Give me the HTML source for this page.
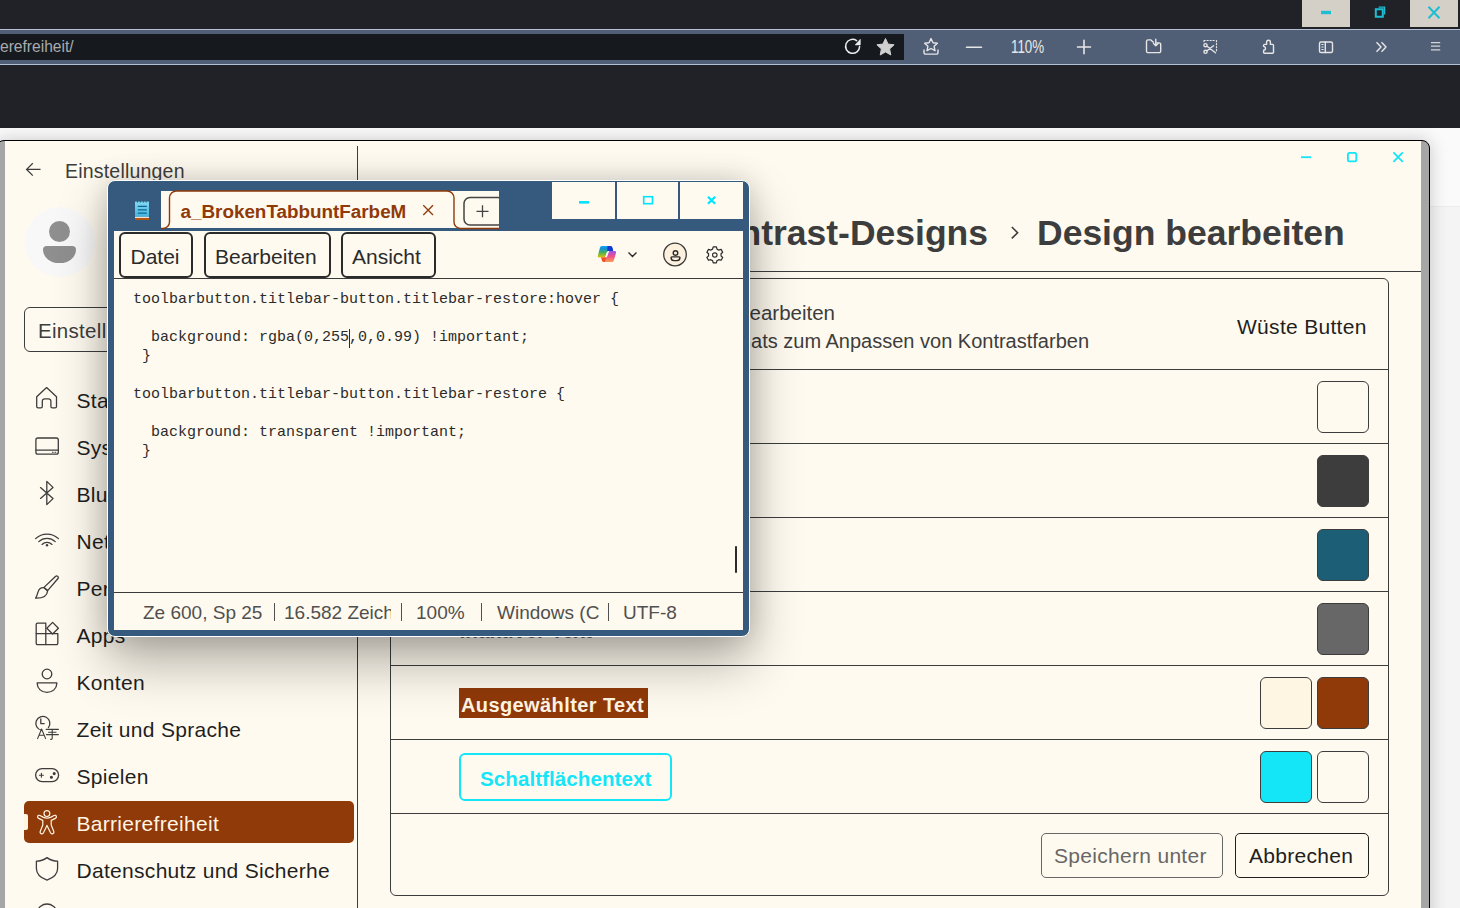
<!DOCTYPE html>
<html><head><meta charset="utf-8">
<style>
*{box-sizing:border-box;margin:0;padding:0}
html,body{width:1460px;height:908px;overflow:hidden;background:#202227;font-family:"Liberation Sans",sans-serif;position:relative}
.a{position:absolute}
svg{position:absolute;overflow:visible}
.t{position:absolute;white-space:pre;line-height:1}
</style></head><body>

<!-- ===== Browser chrome ===== -->
<div class="a" style="left:1302px;top:0;width:48px;height:27px;background:#d4d0c8"></div>
<div class="a" style="left:1410px;top:0;width:48px;height:27px;background:#d4d0c8"></div>
<div class="a" style="left:0;top:29px;width:1460px;height:36px;background:#b3c1d6"></div>
<div class="a" style="left:0;top:30px;width:1460px;height:34px;background:#505f76"></div>
<div class="a" style="left:0;top:34px;width:904px;height:26px;background:#161a1e"></div>
<div class="t" style="left:0;top:38.5px;font-size:15.6px;color:#a9abaf">erefreiheit/</div>


<svg width="1460" height="70" style="left:0;top:0" viewBox="0 0 1460 70">
 <g fill="none" stroke="#1ebdd3">
  <path d="M1321 12.5H1331" stroke-width="3.4"/>
  <path d="M1375.8 9.2h7v7.6h-7z" stroke-width="2"/>
  <path d="M1378.6 7.2h6v7.2" stroke-width="1.3"/>
  <path d="M1428.5 6.8L1439.5 18.2M1439.5 6.8L1428.5 18.2" stroke-width="2"/>
 </g>
 <g fill="none" stroke="#ececec" stroke-width="1.5" stroke-linecap="round">
  <path d="M856.6 40.6A7 7 0 1 0 859.6 46.4"/>
 </g>
 <path d="M855.2 44.9L860.3 39.3V44.9Z" fill="#ececec" stroke="#ececec" stroke-width="0.6" stroke-linejoin="round"/>
 <path d="M885.5 38.5l2.6 5.6 6.0.7-4.5 4.1 1.2 6.1-5.3-3.1-5.3 3.1 1.2-6.1-4.5-4.1 6.0-.7z" fill="#cfcfcf" stroke="#cfcfcf" stroke-width="1" stroke-linejoin="round"/>
 <g fill="none" stroke="#e6e6e6" stroke-width="1.4" stroke-linejoin="round" stroke-linecap="round">
  <path d="M931 38.6l2 4.2 4.4.5-3.3 3 .9 4.4-4-2.2-4 2.2.9-4.4-3.3-3 4.4-.5z"/>
  <path d="M924 50v2.5a1.6 1.6 0 0 0 1.6 1.6h10.8a1.6 1.6 0 0 0 1.6-1.6V50"/>
  <path d="M966.5 47.2H981.5" stroke-width="1.6"/>
  <path d="M1077.5 47H1090.5M1084 40.2V53.8" stroke-width="1.6"/>
  <path d="M1146.5 41.5v9.5a1.6 1.6 0 0 0 1.6 1.6h11a1.6 1.6 0 0 0 1.6-1.6v-6.5a1.6 1.6 0 0 0-1.6-1.6h-2.5M1146.5 41.5a1.6 1.6 0 0 1 1.6-1.6h2.8l2.2 2.2h0.5"/>
  <path d="M1155.8 39.2v6.2M1153.5 43.4l2.3 2.3 2.3-2.3"/>
  <path d="M1204 40.5h1.2M1207 40.5h1.2M1210 40.5h1.2M1213 40.5h1.2M1216.5 40.5v1.2M1216.5 43.5v1.2M1216.5 46.5v1.2M1216.5 49.5v1.2M1204 40.5v1.2" stroke-width="1.2"/>
  <circle cx="1205.5" cy="45.2" r="1.6"/><circle cx="1205.5" cy="51.8" r="1.6"/>
  <path d="M1207 46.3l8.5 6.5M1207 50.7l6.5-5"/>
  <path d="M1264.5 44.4H1266.6V42.2A1.9 1.9 0 0 1 1270.4 42.2V44.4H1272.6A0.9 0.9 0 0 1 1273.5 45.3V52.4A0.9 0.9 0 0 1 1272.6 53.3H1264.5A0.9 0.9 0 0 1 1263.6 52.4V50.2A1.9 1.9 0 0 0 1263.6 46.4V45.3A0.9 0.9 0 0 1 1264.5 44.4Z"/>
  <rect x="1319.5" y="42" width="13" height="10.5" rx="1.6"/>
  <path d="M1325.3 42v10.5"/>
  <path d="M1321.8 44.5h1.4M1321.8 47h1.4M1321.8 49.5h1.4" stroke-width="1.1"/>
  <path d="M1376.5 42.3l4.5 4.7-4.5 4.7M1381.5 42.3l4.5 4.7-4.5 4.7" stroke-linecap="butt"/>
  <path d="M1431 42.6h9.2M1431 46.2h9.2M1431 49.8h9.2" stroke="#d5d5d5" stroke-linecap="butt" stroke-width="1.3"/>
 </g>
</svg>
<div class="t" style="left:1011px;top:38px;font-size:18px;color:#e8e8e8;transform:scaleX(0.74);transform-origin:0 0">110%</div>

<!-- page white area below chrome -->
<div class="a" style="left:0;top:128px;width:1460px;height:780px;background:#fafafa"></div>
<div class="a" style="left:1430px;top:206px;width:30px;height:702px;background:#f4f4f4;border-top:1px solid #ececec"></div>

<!-- ===== Settings window ===== -->
<div id="settings" class="a" style="left:-4px;top:140px;width:1434px;height:800px;background:#a6a6a6;border:1px solid #000;border-radius:8px;box-shadow:0 0 18px rgba(0,0,0,0.2)">
</div>
<div class="a" style="left:5px;top:141px;width:1416px;height:767px;background:#fffaef"></div>


<!-- sidebar divider -->
<div class="a" style="left:357px;top:146px;width:1px;height:762px;background:#3d3d3d"></div>
<!-- back arrow -->
<svg width="20" height="20" style="left:24px;top:160px" viewBox="0 0 20 20"><path d="M3 9.4H16.5M8.8 3.2L2.6 9.4L8.8 15.6" fill="none" stroke="#3d3d3d" stroke-width="1.3"/></svg>
<div class="t" style="left:65px;top:161.5px;font-size:19.5px;letter-spacing:0.2px;color:#3d3d3d">Einstellungen</div>
<!-- avatar -->
<div class="a" style="left:25px;top:207px;width:70px;height:70px;border-radius:50%;background:#f8f8f8"></div>
<div class="a" style="left:49px;top:221px;width:21px;height:21px;border-radius:50%;background:#8f8f8f"></div>
<div class="a" style="left:43px;top:246px;width:33px;height:17px;border-radius:4px 4px 17px 17px/4px 4px 14px 14px;background:#8f8f8f"></div>
<!-- search box -->
<div class="a" style="left:24px;top:307px;width:318px;height:45px;border:1.3px solid #3d3d3d;border-radius:6px"></div>
<div class="t" style="left:38px;top:320.5px;font-size:20.5px;letter-spacing:0.3px;color:#3d3d3d">Einstellungen suchen</div>
<!-- nav selected -->
<div class="a" style="left:24px;top:801px;width:330px;height:42px;background:#903909;border-radius:5px"></div>
<div class="a" style="left:24px;top:814px;width:4px;height:16px;background:#fff5e3;border-radius:0 2px 2px 0"></div>
<div id="nav" class="a" style="left:0;top:130px;width:330px;height:778px;overflow:hidden"><div class="a" style="left:0;top:-130px;width:400px;height:908px"><div class="t" style="left:76.5px;top:390.02px;font-size:21px;letter-spacing:0.3px;color:#1f1f1f">Start</div>
<div class="t" style="left:76.5px;top:437.05px;font-size:21px;letter-spacing:0.3px;color:#1f1f1f">System</div>
<div class="t" style="left:76.5px;top:484.08px;font-size:21px;letter-spacing:0.3px;color:#1f1f1f">Bluetooth und Geräte</div>
<div class="t" style="left:76.5px;top:531.11px;font-size:21px;letter-spacing:0.3px;color:#1f1f1f">Netzwerk und Internet</div>
<div class="t" style="left:76.5px;top:578.14px;font-size:21px;letter-spacing:0.3px;color:#1f1f1f">Personalisierung</div>
<div class="t" style="left:76.5px;top:625.17px;font-size:21px;letter-spacing:0.3px;color:#1f1f1f">Apps</div>
<div class="t" style="left:76.5px;top:672.20px;font-size:21px;letter-spacing:0.3px;color:#1f1f1f">Konten</div>
<div class="t" style="left:76.5px;top:719.23px;font-size:21px;letter-spacing:0.3px;color:#1f1f1f">Zeit und Sprache</div>
<div class="t" style="left:76.5px;top:766.26px;font-size:21px;letter-spacing:0.3px;color:#1f1f1f">Spielen</div>
<div class="t" style="left:76.5px;top:813.29px;font-size:21px;letter-spacing:0.3px;color:#fff5e3">Barrierefreiheit</div>
<div class="t" style="left:76.5px;top:860.32px;font-size:21px;letter-spacing:0.3px;color:#1f1f1f">Datenschutz und Sicherheit</div>
<div class="t" style="left:76.5px;top:907.35px;font-size:21px;letter-spacing:0.3px;color:#1f1f1f">Windows Update</div></div></div>

<svg width="70" height="780" style="left:0;top:130px" viewBox="0 130 70 780">
 <g fill="none" stroke="#3d3d3d" stroke-width="1.3" stroke-linejoin="round" stroke-linecap="round">
  <!-- home -->
  <path d="M36.7 396.8L46.6 387.6L56.5 396.8V406.4A1.4 1.4 0 0 1 55.1 407.8H52.3A1.4 1.4 0 0 1 50.9 406.4V401.2A2.4 2.4 0 0 0 48.5 398.8H44.7A2.4 2.4 0 0 0 42.3 401.2V406.4A1.4 1.4 0 0 1 40.9 407.8H38.1A1.4 1.4 0 0 1 36.7 406.4Z"/>
  <!-- system -->
  <rect x="35.9" y="438" width="22.4" height="16.2" rx="2"/>
  <path d="M36 450.2H58.2"/>
  <path d="M52.4 452.2h0.8M55 452.2h0.8" stroke-width="1.1"/>
  <!-- bluetooth -->
  <path d="M40.5 487.6L53 498.6L46.8 504.6V481.4L53 487.4L40.5 498.4"/>
  <!-- wifi -->
  <path d="M35.6 538.6A16.5 16.5 0 0 1 58.4 538.6"/>
  <path d="M38.8 541.6A12 12 0 0 1 55.2 541.6"/>
  <path d="M42 544.4A7.4 7.4 0 0 1 52 544.4"/>
  <!-- brush -->
  <path d="M57.6 576.2C58.6 576.9 58.4 578 57.8 578.8L47.6 590.6L44 587.4L55.4 576.5C56.2 575.8 57 575.7 57.6 576.2Z"/>
  <path d="M43.8 587.6L47.6 591C47.2 595.6 43 598.4 35.6 598.2C36.8 596.6 37.2 594.4 38 592C38.8 589.2 41.2 587.4 43.8 587.6Z"/>
  <!-- apps -->
  <path d="M37.6 623.2H45.8V633.6H36.2V624.6A1.4 1.4 0 0 1 37.6 623.2Z"/>
  <path d="M36.2 633.6V643.2A1.4 1.4 0 0 0 37.6 644.6H45.8V633.6"/>
  <path d="M45.8 633.6H57.8V643.2A1.4 1.4 0 0 1 56.4 644.6H45.8"/>
  <path d="M52.6 622.4L58.4 628.2L52.6 634L46.8 628.2Z"/>
  <!-- konten -->
  <circle cx="47" cy="674" r="4.8"/>
  <path d="M37.2 682.8H56.8V683.6C56.8 688.6 52.4 692.4 47 692.4C41.6 692.4 37.2 688.6 37.2 683.6Z"/>
  <!-- zeit -->
  <path d="M48.4 727.6A7 7 0 1 0 41.4 730.2"/>
  <path d="M40.8 719V723.6H44.2"/>
  <path d="M37.6 738.6L41.6 729L45.6 738.6M39 735.2H44.2" stroke-width="1.1"/>
  <path d="M46.2 729.4H58.4M48.6 732.2H56M52.2 729.4V738.6C52.2 739.4 51.4 739.6 50.6 739.2M46.4 734.6H58.4" stroke-width="1.1"/>
  <!-- gamepad -->
  <rect x="35.6" y="768.6" width="23" height="13" rx="6.5"/>
  <path d="M39.4 775.2H43.4M41.4 773.2V777.2" stroke-width="1.1"/>
  <circle cx="51.4" cy="777.2" r="0.9" fill="#3d3d3d"/>
  <circle cx="54.2" cy="773.6" r="0.9" fill="#3d3d3d"/>
  <!-- shield -->
  <path d="M47 857.6C50.6 860.2 54 861.2 57.6 861.2V868.6C57.6 873.6 53.8 877.8 47 880.2C40.2 877.8 36.4 873.6 36.4 868.6V861.2C40 861.2 43.4 860.2 47 857.6Z"/>
  <!-- windows update partial -->
  <path d="M37.2 912A10 10 0 0 1 56.8 912"/>
 </g>
 <g fill="none" stroke="#fff5e3" stroke-width="1.2" stroke-linejoin="round">
  <circle cx="46.9" cy="813.6" r="2.9"/>
  <path d="M37.6 816.4C38 815.2 39 815 40 815.5L43.5 817.4C45.8 818.4 48.2 818.4 50.5 817.4L54 815.5C55 815 56 815.2 56.4 816.4C56.6 817.2 56.2 818 55.4 818.4L51.2 820.4V825L53.8 831.4C54.2 832.6 53.6 833.6 52.4 833.8C51.6 834 50.8 833.4 50.4 832.6L47 825.4L43.6 832.6C43.2 833.4 42.4 834 41.6 833.8C40.4 833.6 39.8 832.6 40.2 831.4L42.8 825V820.4L38.6 818.4C37.8 818 37.4 817.2 37.6 816.4Z"/>
 </g>
 <circle cx="47" cy="545.2" r="1.2" fill="#3d3d3d"/>
</svg>


<!-- caption buttons -->
<svg width="120" height="20" style="left:1295px;top:148px" viewBox="1295 148 120 20">
 <g fill="none" stroke="#12e5f7" stroke-width="1.8">
  <path d="M1301 157.2H1311"/>
  <rect x="1347.9" y="152.9" width="8.4" height="8.4" rx="1.6"/>
  <path d="M1393.4 152.4L1402.8 161.8M1402.8 152.4L1393.4 161.8"/>
 </g>
</svg>

<!-- heading -->
<div class="t" style="left:488px;width:500px;text-align:right;top:215.6px;font-size:35.5px;font-weight:700;color:#3d3d3d">Kontrast-Designs</div>
<svg width="12" height="16" style="left:1010px;top:225px" viewBox="0 0 12 16"><path d="M1.8 2L7.6 7.7L1.8 13.4" fill="none" stroke="#3d3d3d" stroke-width="1.6"/></svg>
<div class="t" style="left:1037px;top:215.6px;font-size:35.5px;font-weight:700;color:#3d3d3d">Design bearbeiten</div>
<div class="a" style="left:358px;top:271px;width:1063px;height:1px;background:#3d3d3d"></div>

<!-- card -->
<div class="a" style="left:390px;top:278px;width:999px;height:618px;border:1px solid #3d3d3d;border-radius:6px"></div>
<div class="a" style="left:391px;top:369px;width:997px;height:1px;background:#3d3d3d"></div>
<div class="a" style="left:391px;top:443px;width:997px;height:1px;background:#3d3d3d"></div>
<div class="a" style="left:391px;top:517px;width:997px;height:1px;background:#3d3d3d"></div>
<div class="a" style="left:391px;top:591px;width:997px;height:1px;background:#3d3d3d"></div>
<div class="a" style="left:391px;top:665px;width:997px;height:1px;background:#3d3d3d"></div>
<div class="a" style="left:391px;top:739px;width:997px;height:1px;background:#3d3d3d"></div>
<div class="a" style="left:391px;top:813px;width:997px;height:1px;background:#3d3d3d"></div>

<div class="t" style="left:435px;width:400px;text-align:right;top:302.6px;font-size:20.5px;color:#3d3d3d">Kontrastdesign bearbeiten</div>
<div class="t" style="left:489px;width:600px;text-align:right;top:330.7px;font-size:20px;color:#3d3d3d">Designformats zum Anpassen von Kontrastfarben</div>
<div class="t" style="left:1237px;top:315.7px;font-size:21px;letter-spacing:0.3px;color:#1f1f1f">Wüste Butten</div>

<div class="t" style="left:459px;top:388px;font-size:20px;font-weight:700;color:#3d3d3d">Text</div>
<div class="t" style="left:459px;top:462px;font-size:20px;font-weight:700;color:#1c5e75">Hyperlinks</div>
<div class="t" style="left:459.5px;top:621px;font-size:20.8px;font-weight:700;color:#676767">Inaktiver Text</div>

<div class="a" style="left:1317px;top:381px;width:52px;height:52px;border:1px solid #3d3d3d;border-radius:6px;background:#fffaef"></div>
<div class="a" style="left:1317px;top:455px;width:52px;height:52px;border:1px solid #3d3d3d;border-radius:6px;background:#3d3d3d"></div>
<div class="a" style="left:1317px;top:529px;width:52px;height:52px;border:1px solid #3d3d3d;border-radius:6px;background:#1c5e75"></div>
<div class="a" style="left:1317px;top:603px;width:52px;height:52px;border:1px solid #3d3d3d;border-radius:6px;background:#676767"></div>
<div class="a" style="left:1260px;top:677px;width:52px;height:52px;border:1px solid #3d3d3d;border-radius:6px;background:#fff5e3"></div>
<div class="a" style="left:1317px;top:677px;width:52px;height:52px;border:1px solid #3d3d3d;border-radius:6px;background:#903909"></div>
<div class="a" style="left:1260px;top:751px;width:52px;height:52px;border:1px solid #3d3d3d;border-radius:6px;background:#14e6f8"></div>
<div class="a" style="left:1317px;top:751px;width:52px;height:52px;border:1px solid #3d3d3d;border-radius:6px;background:#fffaef"></div>

<div class="a" style="left:459px;top:688px;width:189px;height:30px;background:#903909"></div>
<div class="t" style="left:461px;top:694.6px;font-size:20px;letter-spacing:0.4px;font-weight:700;color:#fff5e3">Ausgewählter Text</div>

<div class="a" style="left:459px;top:753px;width:213px;height:48px;border:2px solid #14e6f8;border-radius:6px"></div>
<div class="t" style="left:480px;top:768.6px;font-size:20.5px;letter-spacing:0.1px;font-weight:700;color:#14e6f8">Schaltflächentext</div>

<div class="a" style="left:1041px;top:833px;width:182px;height:45px;border:1px solid #676767;border-radius:5px"></div>
<div class="t" style="left:1054px;top:845px;font-size:21px;letter-spacing:0.3px;color:#676767">Speichern unter</div>
<div class="a" style="left:1235px;top:833px;width:134px;height:45px;border:1px solid #202020;border-radius:5px"></div>
<div class="t" style="left:1249px;top:845px;font-size:21px;letter-spacing:0.3px;color:#202020">Abbrechen</div>


<!-- ===== Notepad window ===== -->
<div class="a" style="left:107px;top:180px;width:643px;height:457px;background:#36597e;border:1px solid #fff;border-radius:8px;box-shadow:0 26px 52px rgba(0,0,0,0.30),0 0 28px rgba(0,0,0,0.16)"></div>
<!-- tab strip -->
<div class="a" style="left:161px;top:191px;width:338px;height:37px;background:#fffaef"></div>
<svg width="340" height="40" style="left:160px;top:190px" viewBox="160 190 340 40">
 <path d="M161 228.5H163A6.5 6.5 0 0 0 169.5 222V198A7 7 0 0 1 176.5 191H447A7 7 0 0 1 454 198V222A6.5 6.5 0 0 0 460.5 228.5H499" fill="none" stroke="#903909" stroke-width="1.4"/>
 <path d="M171 191V228" stroke="none"/>
 <path d="M423.3 205.3L433 215M433 205.3L423.3 215" stroke="#903909" stroke-width="1.3" fill="none"/>
 <rect x="464" y="197.5" width="40" height="27.5" rx="6" fill="none" stroke="#444" stroke-width="1.5"/>
 <path d="M476.5 211.3H488.5M482.5 205.3V217.3" stroke="#444" stroke-width="1.3" fill="none"/>
</svg>
<div class="a" style="left:499px;top:190px;width:6px;height:40px;background:#36597e"></div>
<div class="a" style="left:180px;top:197px;width:226px;height:28px;overflow:hidden"><div class="t" style="left:0.5px;top:4.5px;font-size:18.85px;font-weight:700;color:#903909;margin-top:1.5px">a_BrokenTabbuntFarbeMitCSS.txt</div></div>
<!-- notepad icon -->
<svg width="16" height="22" style="left:135px;top:200px" viewBox="0 0 16 22">
 <defs><linearGradient id="npg" x1="0" y1="0" x2="0" y2="1"><stop offset="0" stop-color="#86d8f2"/><stop offset="1" stop-color="#45b4de"/></linearGradient></defs>
 <rect x="0" y="1.6" width="14" height="15.2" fill="url(#npg)"/>
 <rect x="0" y="16.8" width="14" height="1.2" fill="#e8e4dc"/>
 <rect x="0" y="18" width="14" height="2" fill="#b4560e"/>
 <path d="M2.8 6.4H11.8M2.8 9.9H11.8M2.8 13.2H11.8" stroke="#0a6890" stroke-width="1.2"/>
 <path d="M2.5 1.2v1.4M5.4 1.2v1.4M8.4 1.2v1.4M11.2 1.2v1.4" stroke="#0a6890" stroke-width="1"/>
</svg>
<!-- window buttons -->
<div class="a" style="left:552px;top:182px;width:63px;height:37px;background:#fffaef"></div>
<div class="a" style="left:617px;top:182px;width:61px;height:37px;background:#fffaef"></div>
<div class="a" style="left:680px;top:182px;width:63px;height:37px;background:#fffaef"></div>
<svg width="200" height="40" style="left:550px;top:180px" viewBox="550 180 200 40">
 <path d="M579 202.3H589" stroke="#00e5ff" stroke-width="2.6"/>
 <rect x="643.7" y="196.7" width="8.8" height="7" fill="none" stroke="#00e5ff" stroke-width="1.6"/>
 <path d="M708 196.8L715.2 203.8M715.2 196.8L708 203.8" stroke="#00e5ff" stroke-width="2.3"/>
</svg>
<!-- content area -->
<div class="a" style="left:114px;top:231px;width:629px;height:399px;background:#fffaef"></div>
<div class="a" style="left:119px;top:231.5px;width:74px;height:46px;border:2px solid #2b2b2b;border-radius:6px"></div>
<div class="a" style="left:203.5px;top:231.5px;width:127px;height:46px;border:2px solid #2b2b2b;border-radius:6px"></div>
<div class="a" style="left:341px;top:231.5px;width:95px;height:46px;border:2px solid #2b2b2b;border-radius:6px"></div>
<div class="t" style="left:130.5px;top:245.5px;font-size:21px;color:#2b2b2b">Datei</div>
<div class="t" style="left:215px;top:245.5px;font-size:21px;color:#2b2b2b">Bearbeiten</div>
<div class="t" style="left:352px;top:245.5px;font-size:21px;color:#2b2b2b">Ansicht</div>
<div class="a" style="left:114px;top:278px;width:629px;height:1px;background:#3a3a3a"></div>
<!-- right icons -->
<svg width="160" height="40" style="left:590px;top:235px" viewBox="590 235 160 40">
 <defs>
  <linearGradient id="cp1" x1="0" y1="0" x2="0" y2="1"><stop offset="0" stop-color="#18a8f0"/><stop offset="0.2" stop-color="#1090e0"/><stop offset="0.55" stop-color="#40b060"/><stop offset="1" stop-color="#e8c000"/></linearGradient>
  <linearGradient id="cp2" x1="0" y1="0" x2="0" y2="1"><stop offset="0" stop-color="#9a50f0"/><stop offset="0.5" stop-color="#f05088"/><stop offset="1" stop-color="#f8a050"/></linearGradient>
 </defs>
 <path d="M601.5 246H610.5Q612 246 612.5 248L613.2 251H608.5Q607 251 606.6 252.5L605 257.5H599Q597.5 257.5 597.8 256L600 247.5Q600.4 246 601.5 246Z" fill="url(#cp1)"/>
 <path d="M607.5 246H610.5Q612 246 612.5 248L613.2 251H607.3Z" fill="#1438d0"/>
 <path d="M614.5 251Q616.5 251 616 253L613.8 260.5Q613.4 262 612 262H604Q602.5 262 602 260.5L601.2 257.5H605.5Q607 257.5 607.4 256L609 251.6Q609.2 251 610 251Z" fill="url(#cp2)"/>
 <path d="M601.2 257.5H606.2L604.8 262H604Q602.5 262 602 260.5Z" fill="#f05030"/>
 <path d="M628.5 252.5L632.5 256.5L636.5 252.5" fill="none" stroke="#2b2b2b" stroke-width="1.4"/>
 <circle cx="675" cy="254.5" r="11.3" fill="#fdf0dd" stroke="#3a3a3a" stroke-width="1.3"/>
 <circle cx="675.5" cy="253" r="2.3" fill="none" stroke="#2b2b2b" stroke-width="1.4"/>
 <path d="M671.8 256.9h7.4a0.7 0.7 0 0 1 0.7 0.8a3 2.9 0 0 1-2.9 2.9h-3a3 2.9 0 0 1-2.9-2.9a0.7 0.7 0 0 1 0.7-0.8z" fill="none" stroke="#2b2b2b" stroke-width="1.4"/>
 <g transform="translate(714.8 255)" fill="none" stroke="#2b2b2b" stroke-width="1.2" stroke-linejoin="round">
  <path d="M-1.6 -8.2h3.2l0.6 2.3a5.8 5.8 0 0 1 1.8 1l2.3-0.7 1.6 2.8-1.7 1.6a5.8 5.8 0 0 1 0 2.1l1.7 1.6-1.6 2.8-2.3-0.7a5.8 5.8 0 0 1-1.8 1l-0.6 2.3h-3.2l-0.6-2.3a5.8 5.8 0 0 1-1.8-1l-2.3 0.7-1.6-2.8 1.7-1.6a5.8 5.8 0 0 1 0-2.1l-1.7-1.6 1.6-2.8 2.3 0.7a5.8 5.8 0 0 1 1.8-1z"/>
  <circle cx="0" cy="0" r="2.2"/>
 </g>
</svg>
<!-- code -->
<div class="a" style="left:133px;top:290px;width:600px;height:300px;font-family:'Liberation Mono',monospace;font-size:15px;line-height:19px;color:#2b2b2b;white-space:pre">toolbarbutton.titlebar-button.titlebar-restore:hover {

  background: rgba(0,255,0,0.99) !important;
 }

toolbarbutton.titlebar-button.titlebar-restore {

  background: transparent !important;
 }</div>
<div class="a" style="left:349px;top:329px;width:1px;height:19px;background:#2b2b2b"></div>
<div class="a" style="left:734.5px;top:545.5px;width:2.5px;height:27px;background:#2b2b2b;border-radius:1px"></div>
<!-- status bar -->
<div class="a" style="left:114px;top:592px;width:629px;height:1px;background:#3a3a3a"></div>
<div class="t" style="left:143px;top:603.3px;font-size:19px;color:#505050">Ze 600, Sp 25</div>
<div class="a" style="left:274px;top:603px;width:1.3px;height:18px;background:#505050"></div>
<div class="a" style="left:283px;top:598px;width:108px;height:28px;overflow:hidden"><div class="t" style="left:1px;top:5.3px;font-size:19px;color:#505050">16.582 Zeichen</div></div>
<div class="a" style="left:401px;top:603px;width:1.3px;height:18px;background:#505050"></div>
<div class="t" style="left:416px;top:603.3px;font-size:19px;color:#505050">100%</div>
<div class="a" style="left:481px;top:603px;width:1.3px;height:18px;background:#505050"></div>
<div class="a" style="left:496px;top:598px;width:103px;height:28px;overflow:hidden"><div class="t" style="left:1px;top:5.3px;font-size:19px;color:#505050">Windows (CRLF)</div></div>
<div class="a" style="left:607.5px;top:603px;width:1.3px;height:18px;background:#505050"></div>
<div class="t" style="left:623px;top:603.3px;font-size:19px;color:#505050">UTF-8</div>

</body></html>
